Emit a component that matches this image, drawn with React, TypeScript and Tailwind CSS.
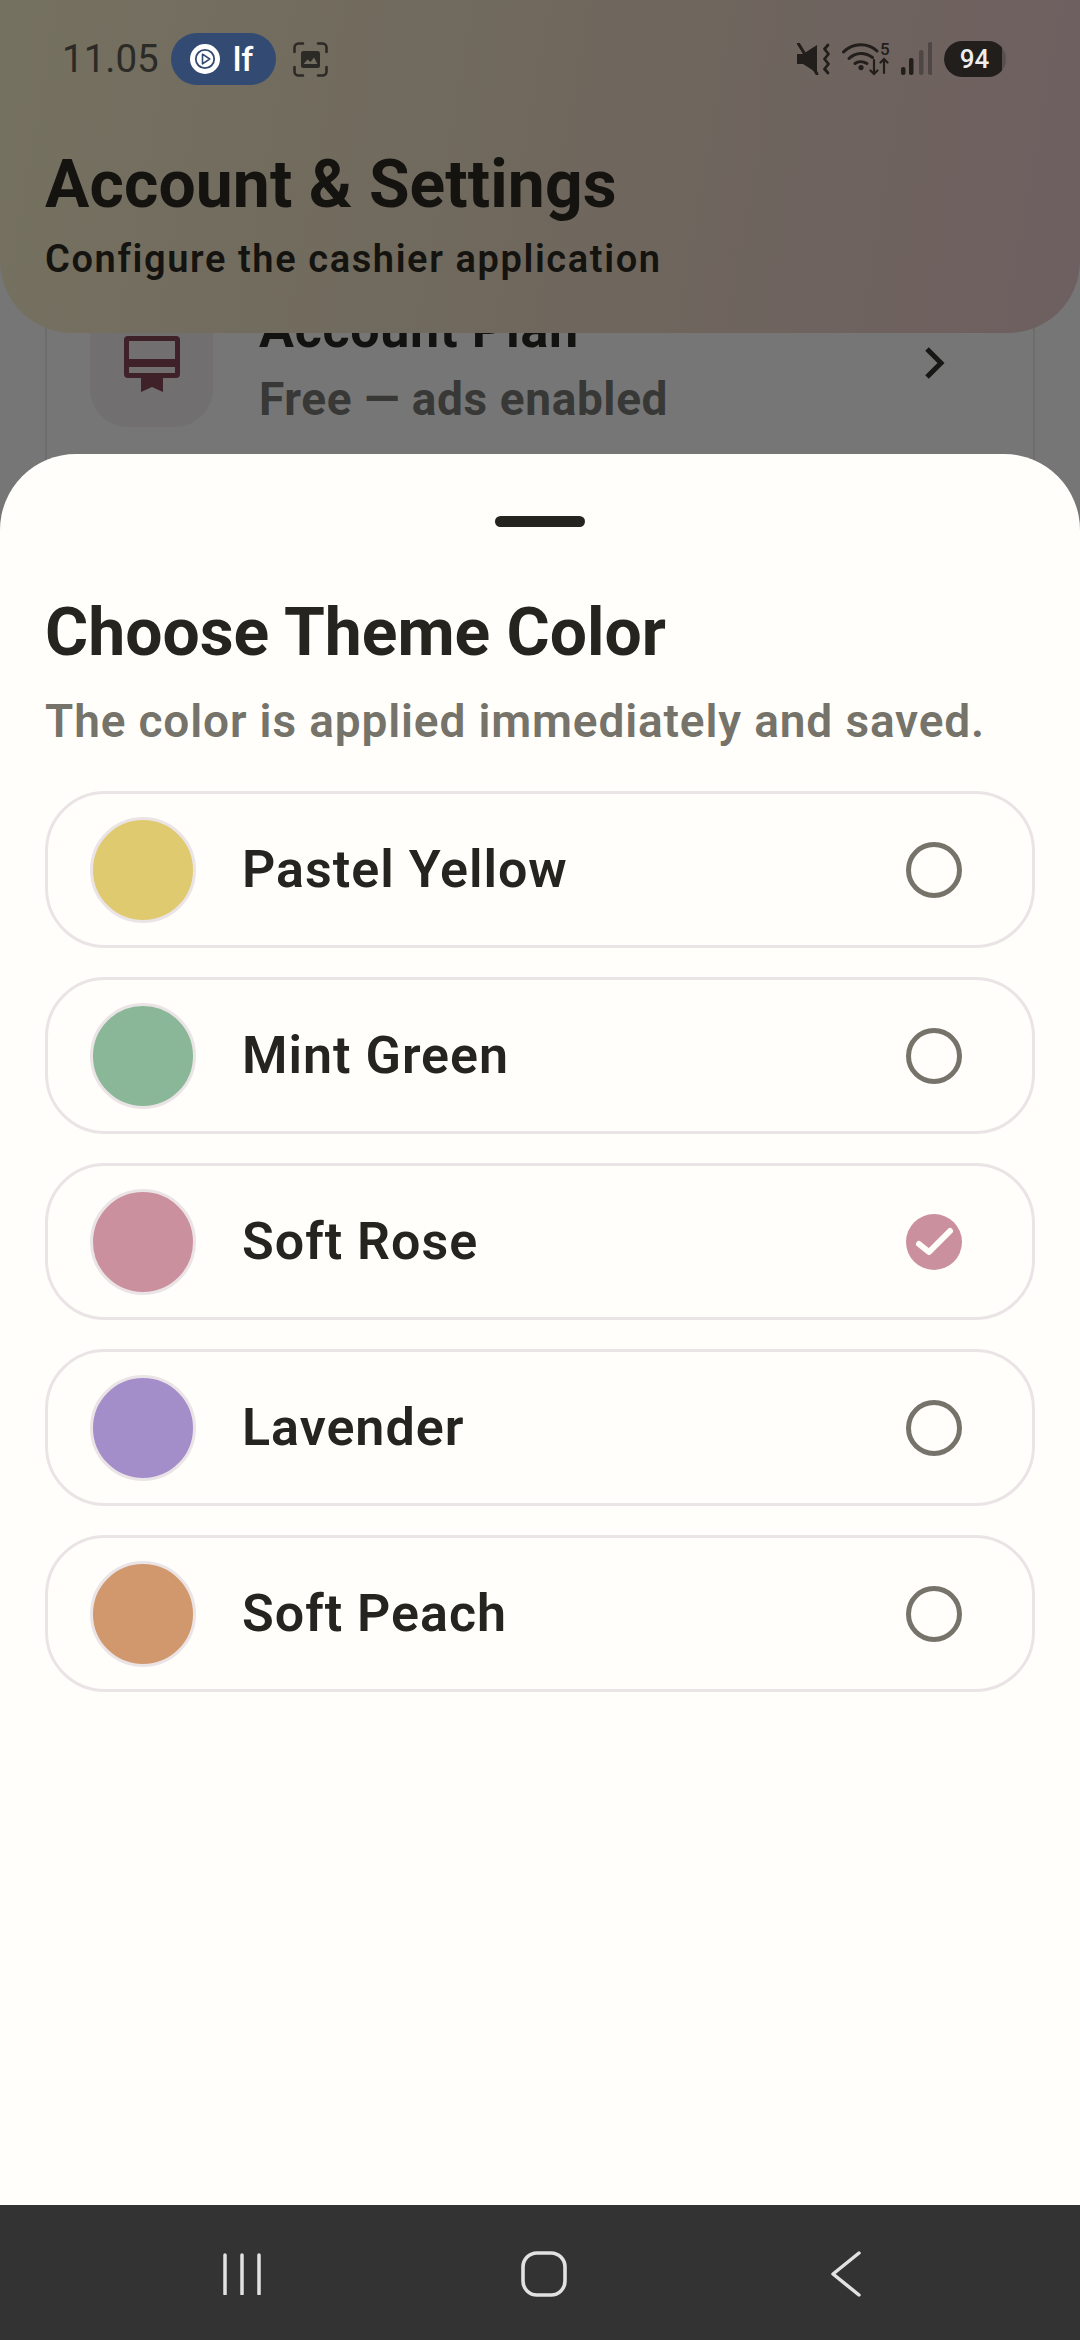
const font = { fontFamily: "Roboto, sans-serif" };

const themes = [
  { name: "Pastel Yellow", color: "bg-[#e0ca70]", selected: false },
  { name: "Mint Green", color: "bg-[#8ab798]", selected: false },
  { name: "Soft Rose", color: "bg-[#cb909d]", selected: true },
  { name: "Lavender", color: "bg-[#a48eca]", selected: false },
  { name: "Soft Peach", color: "bg-[#d0986c]", selected: false },
];

function StatusBar() {
  return (
    <div className="absolute left-0 right-0 top-0 flex h-[116px] items-start justify-between pl-[62px] pr-[74px] pt-[33px]">
      <div className="flex items-center">
        <span className="text-[38.5px] leading-[52px] text-[#2b2a26]">11.05</span>
        <div className="ml-[12px] flex h-[52px] w-[105px] items-center rounded-full bg-[#334a73] pl-[19px]">
          <svg width="30" height="30" viewBox="0 0 30 30">
            <circle cx="15" cy="15" r="15" fill="#fff" />
            <circle cx="15" cy="15" r="9.2" fill="none" stroke="#334a73" strokeWidth="1.8" />
            <path d="M12.5 10.2l7.2 4.8-7.2 4.8z" fill="none" stroke="#334a73" strokeWidth="1.6" strokeLinejoin="round" />
          </svg>
          <span className="ml-[13px] text-[34px] font-medium leading-none text-white">lf</span>
        </div>
        <svg className="ml-[17px]" width="35" height="35" viewBox="0 0 35 35" fill="none">
          <path d="M1.5 10V5.5a4 4 0 0 1 4-4H10M25 1.5h4.5a4 4 0 0 1 4 4V10M33.5 25v4.5a4 4 0 0 1-4 4H25M10 33.5H5.5a4 4 0 0 1-4-4V25" stroke="#2b2a26" strokeWidth="2.6" strokeLinecap="round" />
          <rect x="8" y="9" width="19" height="17" rx="2.5" fill="#2b2a26" />
          <path d="M10.5 22l4-4.5 3 2.5 3.5-4.5 3.5 6.5z" fill="#736d5f" />
        </svg>
      </div>
      <div className="flex items-start">
        <svg className="mt-[10px]" width="34" height="32" viewBox="0 0 34 32" fill="#211e1c">
          <path d="M0 11h6L20 2v28L6 21H0z" />
          <path d="M1 0l19 31" stroke="#211e1c" strokeWidth="3" strokeLinecap="round" />
          <path d="M31 2l-3.5 4 4 5-4 5 4 5-4 5 3.5 4" stroke="#211e1c" strokeWidth="2.8" fill="none" strokeLinecap="round" strokeLinejoin="round" />
        </svg>
        <div className="relative ml-[11px] mt-[10px] h-[33px] w-[47px]">
          <svg width="47" height="33" viewBox="0 0 47 33" fill="none" stroke="#211e1c" strokeLinecap="round">
            <path d="M1.5 9C11 -0.5 26 -0.5 35 8" strokeWidth="3" />
            <path d="M7 15.5C14 9 23 9 30.5 14.5" strokeWidth="3" />
            <path d="M13 20.5C16 18 21 18 25 20.5" strokeWidth="3" />
            <circle cx="19" cy="24.6" r="2.6" fill="#211e1c" stroke="none" />
            <path d="M32 17v14M28.5 27.5L32 31l3.5-3.5M42 30V16M38.5 19.5L42 16l3.500 3.500" strokeWidth="2.2" />
          </svg>
          <span className="absolute left-[38px] -top-[3px] text-[17px] font-medium leading-[18px] text-[#211e1c]">5</span>
        </div>
        <svg className="ml-[12px] mt-[9px]" width="31" height="33" viewBox="0 0 31 33">
          <rect x="0" y="25" width="4.5" height="8" rx="2" fill="#211e1c" />
          <rect x="8" y="16" width="4.5" height="17" rx="2" fill="#211e1c" />
          <rect x="18" y="8" width="4.5" height="25" rx="2" fill="#4e4745" />
          <rect x="27" y="0" width="4.5" height="33" rx="2" fill="#4e4745" />
        </svg>
        <div className="ml-[12px] mt-[8px] flex h-[36px] w-[62px] items-center overflow-hidden rounded-full bg-[#58504f]">
          <div className="flex h-full w-[58px] items-center justify-center rounded-l-full bg-[#211e1c] pl-[3px] text-[26px] font-medium text-[#eeeeee]">94</div>
        </div>
      </div>
    </div>
  );
}

function Background() {
  return (
    <div className="relative h-[454px]">
      <div className="absolute left-[45px] right-[45px] top-[300px] h-[190px] border-x-2 border-[#6d6d6d]">
        <div className="flex">
          <div className="ml-[43px] flex h-[127px] w-[123px] justify-center rounded-b-[38px] bg-[#726f71] pt-[36px]">
            <svg width="56" height="56" viewBox="0 0 56 56">
              <path fillRule="evenodd" d="M4 0h48a4 4 0 0 1 4 4v34a4 4 0 0 1-4 4H39v14l-11-5-11 5V42H4a4 4 0 0 1-4-4V4a4 4 0 0 1 4-4zM5 5v18h46V5zM5 31v6h46v-6z" fill="#3f2129" />
            </svg>
          </div>
          <div className="ml-[46px]">
            <div className="text-[52px] font-bold leading-[60px] tracking-[0.7px] text-[#121210]">Account Plan</div>
            <div className="mt-[12px] text-[46px] font-bold leading-[54px] tracking-[0.6px] text-[#383836]">Free — ads enabled</div>
          </div>
        </div>
      </div>
      <svg className="absolute left-[921px] top-[345px]" width="28" height="36" viewBox="0 0 28 36" fill="none">
        <path d="M6 4l14 14L6 32" stroke="#171715" strokeWidth="5" />
      </svg>
      <div className="absolute inset-x-0 top-0 h-[333px] rounded-b-[72px] bg-[linear-gradient(100deg,#757160_0%,#6f675d_55%,#6e5f60_100%)]">
        <StatusBar />
        <div className="pl-[45px] pt-[147px]">
          <h1 className="text-[66px] font-bold leading-[76px] tracking-[0.1px] text-[#14130f]">Account &amp; Settings</h1>
          <p className="mt-[14px] text-[38px] font-semibold leading-[44px] tracking-[1.6px] text-[#14130f]">Configure the cashier application</p>
        </div>
      </div>
    </div>
  );
}

function ThemeRow({ name, color, selected }: { name: string; color: string; selected: boolean }) {
  return (
    <div className="flex h-[157px] items-center rounded-[60px] border-[3px] border-[#ebe4e6] pl-[42px] pr-[70px]">
      <div className={`h-[106px] w-[106px] rounded-full border-[3px] border-[#ebe4e6] ${color}`} />
      <span className="ml-[46px] flex-1 text-[52px] font-semibold leading-none tracking-[1px] text-[#25241f]">{name}</span>
      {selected ? (
        <svg width="56" height="56" viewBox="0 0 56 56" fill="none">
          <circle cx="28" cy="28" r="28" fill="#cb909d" />
          <path d="M13 30l10 8 21-21" stroke="#fffefa" strokeWidth="6" strokeLinecap="round" strokeLinejoin="round" />
        </svg>
      ) : (
        <div className="h-[56px] w-[56px] rounded-full border-[5px] border-[#75736a]" />
      )}
    </div>
  );
}

export default function App() {
  return (
    <div className="flex h-[2340px] w-[1080px] flex-col overflow-hidden bg-[#767676]" style={font}>
      <Background />
      <div className="relative z-10 flex flex-1 flex-col rounded-t-[76px] bg-[#fffefa] px-[45px]">
        <div className="mx-auto mt-[62px] h-[11px] w-[90px] rounded-full bg-[#25241f]" />
        <h2 className="mt-[68px] text-[66px] font-bold leading-[76px] text-[#25241f]">Choose Theme Color</h2>
        <p className="mt-[22px] text-[46px] font-semibold leading-[56px] tracking-[0.85px] text-[#75736a]">The color is applied immediately and saved.</p>
        <div className="mt-[42px] flex flex-col gap-[29px]">
          {themes.map((t) => (
            <ThemeRow key={t.name} {...t} />
          ))}
        </div>
      </div>
      <div className="relative z-10 flex h-[135px] items-start bg-[#333333]">
        <svg className="ml-[222px] mt-[48px]" width="40" height="42" viewBox="0 0 40 42" stroke="#e2e2e2" strokeWidth="3.5" strokeLinecap="round">
          <path d="M3 2v39M20 2v39M37 2v39" />
        </svg>
        <svg className="ml-[259px] mt-[46px]" width="46" height="46" viewBox="0 0 46 46" fill="none">
          <rect x="2" y="2" width="42" height="42" rx="14" stroke="#e2e2e2" strokeWidth="3.6" />
        </svg>
        <svg className="ml-[263px] mt-[46px]" width="32" height="46" viewBox="0 0 32 46" fill="none">
          <path d="M29 2L3 23l26 21" stroke="#e2e2e2" strokeWidth="3.5" strokeLinecap="round" strokeLinejoin="round" />
        </svg>
      </div>
    </div>
  );
}
